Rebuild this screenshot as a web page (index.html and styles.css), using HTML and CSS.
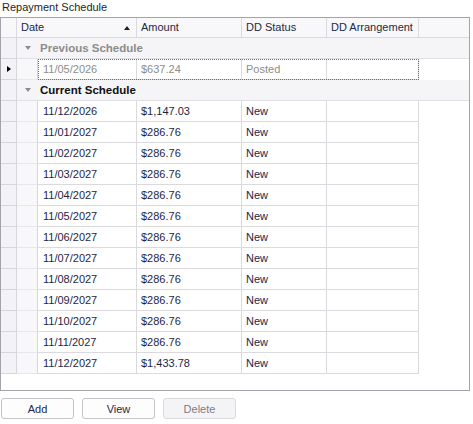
FILE: index.html
```html
<!DOCTYPE html>
<html>
<head>
<meta charset="utf-8">
<link rel="stylesheet" href="styles.css">
</head>
<body>
<div class="title">Repayment Schedule</div>
<div class="grid">
  <div class="row header">
    <div class="ind"></div>
    <div class="hcell c-date2">Date<span class="sort"></span></div>
    <div class="hcell c-amt">Amount</div>
    <div class="hcell c-st">DD Status</div>
    <div class="hcell c-arr">DD Arrangement</div>
    <div class="hfill"></div>
  </div>
  <div class="row group">
    <div class="ind"></div>
    <div class="gcell"><span class="expander"></span><span class="gtext muted">Previous Schedule</span></div>
  </div>
  <div class="row data">
    <div class="ind"><span class="cur"></span></div>
    <div class="indent"></div>
    <div class="cells focused posted">
      <div class="cell c-date">11/05/2026</div>
      <div class="cell c-amt">$637.24</div>
      <div class="cell c-st">Posted</div>
      <div class="cell c-arr"></div>
    </div>
  </div>
  <div class="row group">
    <div class="ind"></div>
    <div class="gcell"><span class="expander"></span><span class="gtext">Current Schedule</span></div>
  </div>
  <div class="row data"><div class="ind"></div><div class="indent"></div><div class="cells"><div class="cell c-date">11/12/2026</div><div class="cell c-amt">$1,147.03</div><div class="cell c-st">New</div><div class="cell c-arr"></div></div></div>
  <div class="row data"><div class="ind"></div><div class="indent"></div><div class="cells"><div class="cell c-date">11/01/2027</div><div class="cell c-amt">$286.76</div><div class="cell c-st">New</div><div class="cell c-arr"></div></div></div>
  <div class="row data"><div class="ind"></div><div class="indent"></div><div class="cells"><div class="cell c-date">11/02/2027</div><div class="cell c-amt">$286.76</div><div class="cell c-st">New</div><div class="cell c-arr"></div></div></div>
  <div class="row data"><div class="ind"></div><div class="indent"></div><div class="cells"><div class="cell c-date">11/03/2027</div><div class="cell c-amt">$286.76</div><div class="cell c-st">New</div><div class="cell c-arr"></div></div></div>
  <div class="row data"><div class="ind"></div><div class="indent"></div><div class="cells"><div class="cell c-date">11/04/2027</div><div class="cell c-amt">$286.76</div><div class="cell c-st">New</div><div class="cell c-arr"></div></div></div>
  <div class="row data"><div class="ind"></div><div class="indent"></div><div class="cells"><div class="cell c-date">11/05/2027</div><div class="cell c-amt">$286.76</div><div class="cell c-st">New</div><div class="cell c-arr"></div></div></div>
  <div class="row data"><div class="ind"></div><div class="indent"></div><div class="cells"><div class="cell c-date">11/06/2027</div><div class="cell c-amt">$286.76</div><div class="cell c-st">New</div><div class="cell c-arr"></div></div></div>
  <div class="row data"><div class="ind"></div><div class="indent"></div><div class="cells"><div class="cell c-date">11/07/2027</div><div class="cell c-amt">$286.76</div><div class="cell c-st">New</div><div class="cell c-arr"></div></div></div>
  <div class="row data"><div class="ind"></div><div class="indent"></div><div class="cells"><div class="cell c-date">11/08/2027</div><div class="cell c-amt">$286.76</div><div class="cell c-st">New</div><div class="cell c-arr"></div></div></div>
  <div class="row data"><div class="ind"></div><div class="indent"></div><div class="cells"><div class="cell c-date">11/09/2027</div><div class="cell c-amt">$286.76</div><div class="cell c-st">New</div><div class="cell c-arr"></div></div></div>
  <div class="row data"><div class="ind"></div><div class="indent"></div><div class="cells"><div class="cell c-date">11/10/2027</div><div class="cell c-amt">$286.76</div><div class="cell c-st">New</div><div class="cell c-arr"></div></div></div>
  <div class="row data"><div class="ind"></div><div class="indent"></div><div class="cells"><div class="cell c-date">11/11/2027</div><div class="cell c-amt">$286.76</div><div class="cell c-st">New</div><div class="cell c-arr"></div></div></div>
  <div class="row data"><div class="ind"></div><div class="indent"></div><div class="cells"><div class="cell c-date">11/12/2027</div><div class="cell c-amt">$1,433.78</div><div class="cell c-st">New</div><div class="cell c-arr"></div></div></div>
</div>
<div class="buttons">
  <button class="btn">Add</button>
  <button class="btn">View</button>
  <button class="btn disabled">Delete</button>
</div>
</body>
</html>
```
FILE: styles.css
```css
* { box-sizing: border-box; }
body {
  margin: 0;
  font-family: "Liberation Sans", Arial, sans-serif;
  font-size: 11px;
  color: #1e1e3c;
  background: #ffffff;
}
.title {
  height: 17px;
  line-height: 15px;
  padding-left: 2px;
  color: #1e1e28;
}
.grid {
  width: 470px;
  height: 374px;
  border: 1px solid #a3a3ab;
  background: #ffffff;
  display: flex;
  flex-direction: column;
}
.row {
  display: flex;
  height: 21px;
  flex: none;
}
.row.header { height: 20px; background: #f8f8fa; }
.ind {
  width: 16px;
  flex: none;
  background: #f3f3f7;
  border-right: 1px solid #d6d6dc;
  border-bottom: 1px solid #d6d6dc;
  position: relative;
}
.header .ind { background: #f8f8fa; border-right-color: #dadade; border-bottom-color: #dadade; }
.hcell {
  flex: none;
  height: 20px;
  line-height: 19px;
  padding-left: 4px;
  border-right: 1px solid #dadade;
  border-bottom: 1px solid #dadade;
  color: #1e2846;
  position: relative;
}
.c-date2 { width: 120px; }
.c-date { width: 99px; padding-left: 5px; }
.c-amt { width: 105px; }
.c-st { width: 85px; }
.c-arr { width: 92px; }
.hfill { flex: 1; border-bottom: 1px solid #dadade; }
.sort {
  position: absolute;
  left: 107px;
  top: 8px;
  width: 0;
  height: 0;
  border-left: 3px solid transparent;
  border-right: 3px solid transparent;
  border-bottom: 4px solid #1e1e1e;
}
.group .gcell {
  flex: 1;
  background: #f5f5f8;
  border-bottom: 1px solid #e0e0e6;
  display: flex;
  align-items: center;
  font-weight: bold;
  color: #101010;
}
.expander {
  width: 0;
  height: 0;
  margin-left: 8px;
  margin-right: 9px;
  border-left: 3px solid transparent;
  border-right: 3px solid transparent;
  border-top: 4px solid #8c8c94;
}
.gtext { line-height: 20px; font-size: 11.5px; }
.gtext.muted { color: #8c8c8c; }
.indent {
  width: 21px;
  flex: none;
  background: #f8f8fa;
  border-right: 1px solid #d6d6dc;
  border-bottom: 1px solid #e8e8ec;
}
.cells { display: flex; flex: none; }
.cell {
  flex: none;
  height: 21px;
  line-height: 20px;
  padding-left: 4px;
  border-right: 1px solid #d9d9de;
  border-bottom: 1px solid #d9d9de;
  color: #1e1e46;
  white-space: nowrap;
}
.cells .c-date { padding-left: 5px; }
.focused { outline: 1px dotted #707070; outline-offset: -1px; }
.posted .cell { color: #8c8c8c; }
.cur {
  position: absolute;
  left: 6px;
  top: 7px;
  width: 0;
  height: 0;
  border-top: 3.5px solid transparent;
  border-bottom: 3.5px solid transparent;
  border-left: 4px solid #000000;
}
.buttons {
  display: flex;
  gap: 8px;
  margin-top: 7px;
  padding-left: 1px;
}
.btn {
  width: 73px;
  height: 21px;
  border: 1px solid #c4c4c8;
  border-radius: 3px;
  background: #fdfdfd;
  font-family: "Liberation Sans", Arial, sans-serif;
  font-size: 11px;
  color: #1e2846;
  padding: 0;
}
.btn.disabled {
  background: #f4f4f6;
  border-color: #dadade;
  color: #7c7c84;
}
```
